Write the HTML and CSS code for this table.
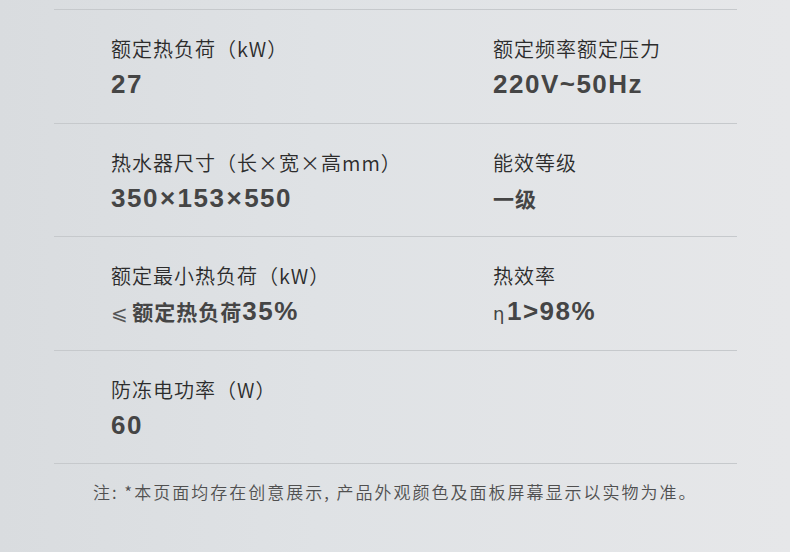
FILE: index.html
```html
<!DOCTYPE html>
<html lang="zh-CN">
<head>
<meta charset="utf-8">
<title>参数</title>
<link rel="stylesheet" href="styles.css">
</head>
<body>
<div class="page">
  <div class="specs">
    <div class="row">
      <div class="cell">
        <div class="label">额定热负荷（kW）</div>
        <div class="value">27</div>
      </div>
      <div class="cell">
        <div class="label">额定频率额定压力</div>
        <div class="value">220V~50Hz</div>
      </div>
    </div>
    <div class="row">
      <div class="cell">
        <div class="label">热水器尺寸（长×宽×高mm）</div>
        <div class="value">350<span class="times">×</span>153<span class="times">×</span>550</div>
      </div>
      <div class="cell">
        <div class="label">能效等级</div>
        <div class="value"><span class="cjk">一级</span></div>
      </div>
    </div>
    <div class="row">
      <div class="cell">
        <div class="label">额定最小热负荷（kW）</div>
        <div class="value"><span class="sym">⩽</span><span class="cjk">额定热负荷</span>35%</div>
      </div>
      <div class="cell">
        <div class="label">热效率</div>
        <div class="value"><span class="eta">η</span>1&gt;98%</div>
      </div>
    </div>
    <div class="row">
      <div class="cell">
        <div class="label">防冻电功率（W）</div>
        <div class="value">60</div>
      </div>
    </div>
    <div class="rule"></div>
  </div>
  <p class="note">注: *本页面均存在创意展示, 产品外观颜色及面板屏幕显示以实物为准。</p>
</div>
</body>
</html>
```

FILE: styles.css
```css
html, body {
  margin: 0;
  padding: 0;
}
body {
  width: 790px;
  height: 552px;
  overflow: hidden;
  background: linear-gradient(90deg, #d9dcdf 0%, #dfe2e5 40%, #e6e7e9 100%);
  font-family: "Noto Sans CJK SC", "Noto Sans", sans-serif;
}
.page {
  padding-top: 9px;
}
.specs {
  margin-left: 54px;
  width: 683px;
}
.row {
  box-sizing: border-box;
  height: 113.5px;
  border-top: 1px solid #c6c9cc;
  display: grid;
  grid-template-columns: 382px 1fr;
  padding-left: 57px;
  padding-top: 25px;
}
.rule {
  border-top: 1px solid #c6c9cc;
}
.label {
  font-size: 20px;
  font-weight: 350;
  line-height: 28px;
  color: #2c2c2c;
  letter-spacing: 1px;
}
.value {
  margin-top: 4px;
  font-family: "Liberation Sans", "Noto Sans CJK SC", sans-serif;
  font-weight: bold;
  font-size: 26px;
  line-height: 34px;
  color: #454545;
  letter-spacing: 1.5px;
}
.cjk {
  font-family: "Noto Sans CJK SC", sans-serif;
  font-size: 21px;
  letter-spacing: 1px;
}
.times {
  margin: 0 1px;
}
.sym {
  font-family: "DejaVu Sans", "Noto Sans CJK SC", sans-serif;
  font-weight: normal;
  font-size: 20px;
  color: #555;
  margin-right: 3px;
}
.eta {
  font-family: "DejaVu Sans", sans-serif;
  font-weight: normal;
  font-size: 18px;
  color: #444;
  margin-right: 1px;
}
.note {
  margin: 15px 0 0 93px;
  font-size: 17px;
  font-weight: 350;
  line-height: 26px;
  color: #505050;
  letter-spacing: 2px;
}
```
